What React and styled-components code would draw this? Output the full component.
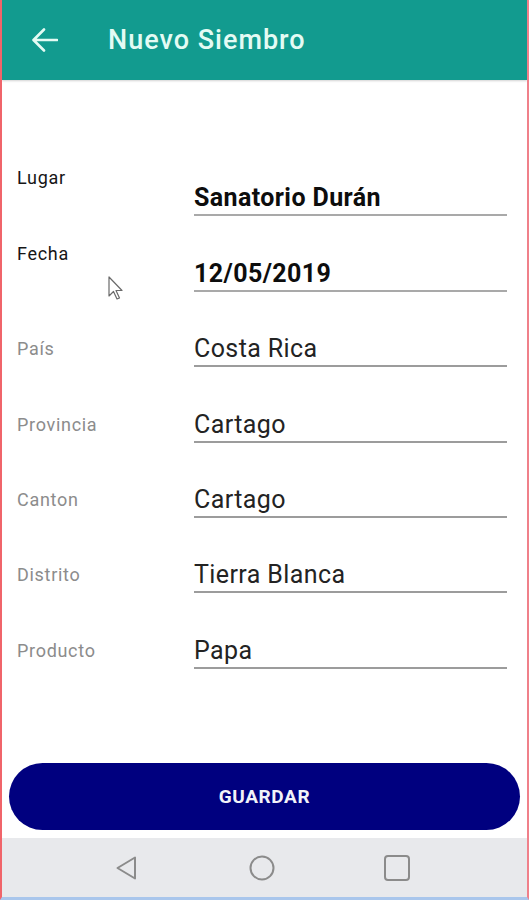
import React from "react";
import styled, { createGlobalStyle } from "styled-components";

const GlobalStyle = createGlobalStyle`
  html, body {
    margin: 0;
    padding: 0;
    background: #ffffff;
  }
  body {
    font-family: Roboto, "Noto Sans", Arial, sans-serif;
  }
`;

const Screen = styled.div`
  position: relative;
  width: 529px;
  height: 900px;
  box-sizing: border-box;
  border-left: 2px solid #f0646a;
  border-right: 2px solid #f0808a;
  border-bottom: 3px solid #a9c6ec;
  display: flex;
  flex-direction: column;
  background: #ffffff;
  overflow: hidden;
`;

const Header = styled.header`
  height: 80px;
  flex-shrink: 0;
  background: #129b8f;
  display: flex;
  align-items: center;
  box-shadow: 0 1px 2px rgba(0, 0, 0, 0.18);
  position: relative;
  z-index: 1;
`;

const BackButton = styled.button`
  border: 0;
  background: none;
  padding: 0;
  margin-left: 28px;
  width: 28px;
  height: 28px;
  display: flex;
  align-items: center;
  justify-content: center;
`;

const Title = styled.h1`
  margin: 0 0 0 50px;
  font-size: 27px;
  font-weight: 500;
  color: #e4fbf4;
  letter-spacing: 1px;
`;

const Form = styled.div`
  padding-top: 61px;
  display: flex;
  flex-direction: column;
`;

const Row = styled.div`
  height: 75.4px;
  display: grid;
  grid-template-columns: 177px 1fr;
  align-items: end;
  padding: 0 20px 0 15px;
`;

const Label = styled.div`
  font-size: 18px;
  line-height: 32px;
  letter-spacing: 0.7px;
  color: ${(p) => (p.$strong ? "#161616" : "#8c8c8c")};
  margin-bottom: ${(p) => (p.$raised ? "22px" : "2px")};
`;

const Field = styled.div`
  font-size: 25px;
  line-height: 32px;
  letter-spacing: 0.4px;
  font-weight: ${(p) => (p.$strong ? 700 : 400)};
  color: ${(p) => (p.$strong ? "#0d0d0d" : "#232323")};
  border-bottom: 2px solid ${(p) => (p.$strong ? "#a9a9a9" : "#9c9c9c")};
`;

const Spacer = styled.div`
  flex: 1;
`;

const SaveButton = styled.button`
  margin: 0 7px 8px;
  height: 67px;
  border: 0;
  border-radius: 34px;
  background: #00007f;
  color: #f2f2f8;
  font-family: Roboto, Arial, sans-serif;
  font-size: 19px;
  font-weight: 700;
  letter-spacing: 0.6px;
  flex-shrink: 0;
`;

const NavBar = styled.nav`
  height: 59px;
  flex-shrink: 0;
  background: #e8e9ec;
  display: flex;
  align-items: center;
  justify-content: center;
  gap: 107px;
  padding-right: 5px;
`;

const Cursor = styled.svg`
  position: absolute;
  left: 105px;
  top: 275px;
`;

const fields = [
  { label: "Lugar", value: "Sanatorio Durán", strong: true },
  { label: "Fecha", value: "12/05/2019", strong: true },
  { label: "País", value: "Costa Rica" },
  { label: "Provincia", value: "Cartago" },
  { label: "Canton", value: "Cartago" },
  { label: "Distrito", value: "Tierra Blanca" },
  { label: "Producto", value: "Papa" },
];

export default function App() {
  return (
    <>
      <GlobalStyle />
      <Screen>
        <Header>
          <BackButton aria-label="Volver">
            <svg width="27" height="26" viewBox="0 0 27 26" fill="none">
              <path
                d="M26 13H3M13 2.5L2.5 13L13 23.5"
                stroke="#e4fbf4"
                strokeWidth="2.6"
                strokeLinecap="round"
                strokeLinejoin="round"
              />
            </svg>
          </BackButton>
          <Title>Nuevo Siembro</Title>
        </Header>
        <Form>
          {fields.map((f) => (
            <Row key={f.label}>
              <Label $strong={f.strong} $raised={f.strong}>
                {f.label}
              </Label>
              <Field $strong={f.strong}>{f.value}</Field>
            </Row>
          ))}
        </Form>
        <Spacer />
        <SaveButton>GUARDAR</SaveButton>
        <NavBar>
          <svg width="28" height="28" viewBox="0 0 28 28" fill="none">
            <path
              d="M22 3.5V24.5L4.5 14Z"
              stroke="#8b8b8b"
              strokeWidth="2"
              strokeLinejoin="round"
            />
          </svg>
          <svg width="28" height="28" viewBox="0 0 28 28" fill="none">
            <circle cx="14" cy="14" r="11.5" stroke="#8b8b8b" strokeWidth="2" />
          </svg>
          <svg width="28" height="28" viewBox="0 0 28 28" fill="none">
            <rect x="2" y="2" width="24" height="24" rx="3" stroke="#8b8b8b" strokeWidth="2" />
          </svg>
        </NavBar>
        <Cursor width="20" height="28" viewBox="0 0 20 28" fill="none">
          <path
            d="M2 2V21L6.5 16.5L10 24L12.5 23L9 15.5H15Z"
            fill="#ffffff"
            stroke="#6a6a6a"
            strokeWidth="1.2"
            strokeLinejoin="round"
          />
        </Cursor>
      </Screen>
    </>
  );
}
